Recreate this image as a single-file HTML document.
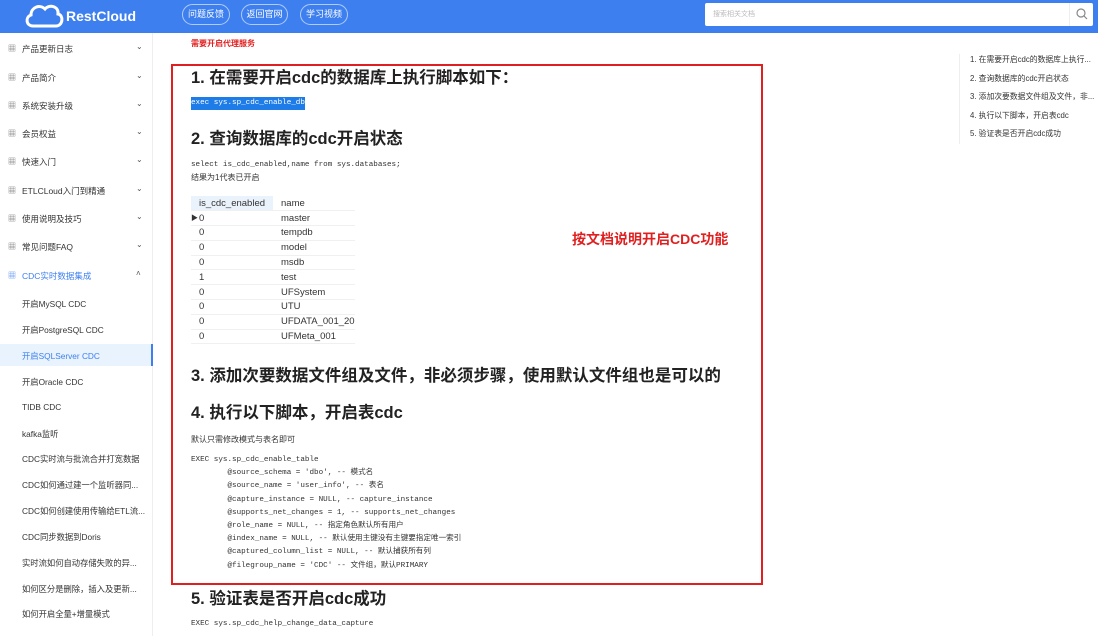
<!DOCTYPE html>
<html><head><meta charset="utf-8"><style>
*{margin:0;padding:0;box-sizing:border-box}
body{width:1098px;height:636px;overflow:hidden;background:#fff;font-family:"Liberation Sans","Noto Sans CJK SC",sans-serif;position:relative;color:#333}
.hdr{position:absolute;left:0;top:0;width:1098px;height:33px;background:#3d7fef}
.logo{position:absolute;left:24px;top:3px}
.logot{position:absolute;left:66px;top:8px;color:#fff;font-size:14px;font-weight:bold}
.btn{position:absolute;top:4px;height:21px;border:1px solid rgba(255,255,255,.6);border-radius:11px;color:#fff;font-size:9px;line-height:19px;text-align:center}
.search{position:absolute;left:705px;top:3px;width:388px;height:23px;background:#fff;border-radius:2px}
.search span{position:absolute;left:8px;top:6px;font-size:7px;color:#bbb}
.side{position:absolute;left:0;top:33px;width:153px;height:603px;border-right:1px solid #eee}
.it{position:absolute;left:0;width:153px;font-size:8.5px;color:#333}
.it .ic{position:absolute;left:8px;top:0;font-size:8px;color:#666}
.it .t{position:absolute;left:22px;top:0}
.it .ar{position:absolute;left:136px;top:-1px;font-size:8px;color:#555}
.sub{position:absolute;left:22px;font-size:8.3px;color:#333}
.act{position:absolute;left:0;top:311px;width:153px;height:22px;background:#e8f3fd;border-right:2px solid #3d7fef}
.box{position:absolute;left:171px;top:64px;width:592px;height:521px;border:2px solid #e02020}
h2{position:absolute;left:191px;font-size:16.5px;font-weight:bold;color:#222;white-space:nowrap}
.mono{position:absolute;left:191px;font-family:"Liberation Mono","Noto Sans CJK SC",monospace;font-size:7.6px;color:#333;white-space:pre;line-height:13.2px}
.sm{position:absolute;left:191px;font-size:8px;color:#333}
table{position:absolute;left:191px;top:196px;border-collapse:collapse;font-size:9.5px;font-family:"Liberation Sans",sans-serif}
td{height:14.8px;padding:0 0 0 8px;border-bottom:1px solid #f0f0f0}
td.a{width:82px}td.b{width:72px;padding-left:8px;overflow:hidden;white-space:nowrap}
.toc{position:absolute;left:959px;top:54px;border-left:1px solid #eee;height:90px;padding-left:10px}
.toc div{font-size:7.8px;color:#333;height:18.6px;white-space:nowrap}
</style></head><body>
<div class="hdr">
<svg class="logo" width="40" height="26" viewBox="0 0 40 26"><path d="M9 23 C2 23 1 14 7 12 C7 4 16 1 21 6 C25 1 35 3 34 11 C40 12 39 23 32 23 Z" fill="none" stroke="#fff" stroke-width="3"/></svg>
<div class="logot">RestCloud</div>
<div class="btn" style="left:182px;width:48px">问题反馈</div>
<div class="btn" style="left:241px;width:47px">返回官网</div>
<div class="btn" style="left:300px;width:48px">学习视频</div>
<div class="search"><span>搜索相关文档</span><svg style="position:absolute;right:0;top:0;border-left:1px solid #eee" width="24" height="23"><circle cx="11" cy="10" r="4" fill="none" stroke="#888" stroke-width="1.2"/><path d="M14 13 L17 16" stroke="#888" stroke-width="1.2"/></svg></div>
</div>
<div class="side">
<div class="act"></div>
<div class="it" style="top:10px"><span class="ic">▦</span><span class="t">产品更新日志</span><span class="ar">⌄</span></div>
<div class="it" style="top:39px"><span class="ic">▦</span><span class="t">产品简介</span><span class="ar">⌄</span></div>
<div class="it" style="top:67px"><span class="ic">▦</span><span class="t">系统安装升级</span><span class="ar">⌄</span></div>
<div class="it" style="top:95px"><span class="ic">▦</span><span class="t">会员权益</span><span class="ar">⌄</span></div>
<div class="it" style="top:123px"><span class="ic">▦</span><span class="t">快速入门</span><span class="ar">⌄</span></div>
<div class="it" style="top:152px"><span class="ic">▦</span><span class="t">ETLCLoud入门到精通</span><span class="ar">⌄</span></div>
<div class="it" style="top:180px"><span class="ic">▦</span><span class="t">使用说明及技巧</span><span class="ar">⌄</span></div>
<div class="it" style="top:208px"><span class="ic">▦</span><span class="t">常见问题FAQ</span><span class="ar">⌄</span></div>
<div class="it" style="top:237px;color:#3d7fef"><span class="ic" style="color:#3d7fef">▦</span><span class="t">CDC实时数据集成</span><span class="ar">˄</span></div>
<div class="sub" style="top:265px">开启MySQL CDC</div>
<div class="sub" style="top:291px">开启PostgreSQL CDC</div>
<div class="sub" style="top:317px;color:#3d7fef">开启SQLServer CDC</div>
<div class="sub" style="top:343px">开启Oracle CDC</div>
<div class="sub" style="top:369px">TIDB CDC</div>
<div class="sub" style="top:395px">kafka监听</div>
<div class="sub" style="top:420px">CDC实时流与批流合并打宽数据</div>
<div class="sub" style="top:446px">CDC如何通过建一个监听器同...</div>
<div class="sub" style="top:472px">CDC如何创建使用传输给ETL流...</div>
<div class="sub" style="top:498px">CDC同步数据到Doris</div>
<div class="sub" style="top:524px">实时流如何自动存储失败的异...</div>
<div class="sub" style="top:550px">如何区分是删除，插入及更新...</div>
<div class="sub" style="top:575px">如何开启全量+增量模式</div>
</div>
<div style="position:absolute;left:191px;top:38px;font-size:8px;color:#e02020;font-weight:bold">需要开启代理服务</div>
<div class="box"></div>
<h2 style="top:64px">1. 在需要开启cdc的数据库上执行脚本如下：</h2>
<div class="mono" style="top:97px;background:#1e7ce8;color:#fff">exec sys.sp_cdc_enable_db</div>
<h2 style="top:125px">2. 查询数据库的cdc开启状态</h2>
<div class="mono" style="top:159px">select is_cdc_enabled,name from sys.databases;</div>
<div class="sm" style="top:172px">结果为1代表已开启</div>
<table>
<tr><td class="a" style="background:#eaf2fb">is_cdc_enabled</td><td class="b">name</td></tr>
<tr><td class="a">0</td><td class="b">master</td></tr>
<tr><td class="a">0</td><td class="b">tempdb</td></tr>
<tr><td class="a">0</td><td class="b">model</td></tr>
<tr><td class="a">0</td><td class="b">msdb</td></tr>
<tr><td class="a">1</td><td class="b">test</td></tr>
<tr><td class="a">0</td><td class="b">UFSystem</td></tr>
<tr><td class="a">0</td><td class="b">UTU</td></tr>
<tr><td class="a">0</td><td class="b">UFDATA_001_20</td></tr>
<tr><td class="a">0</td><td class="b">UFMeta_001</td></tr>
</table>
<div style="position:absolute;left:191px;top:213px;font-size:7px">▶</div>
<div style="position:absolute;left:572px;top:229px;font-size:14px;font-weight:bold;color:#e02020">按文档说明开启CDC功能</div>
<h2 style="top:362px">3. 添加次要数据文件组及文件，非必须步骤，使用默认文件组也是可以的</h2>
<h2 style="top:399px">4. 执行以下脚本，开启表cdc</h2>
<div class="sm" style="top:434px">默认只需修改模式与表名即可</div>
<div class="mono" style="top:454px">EXEC sys.sp_cdc_enable_table
        @source_schema = 'dbo', -- 模式名
        @source_name = 'user_info', -- 表名
        @capture_instance = NULL, -- capture_instance
        @supports_net_changes = 1, -- supports_net_changes
        @role_name = NULL, -- 指定角色默认所有用户
        @index_name = NULL, -- 默认使用主键没有主键要指定唯一索引
        @captured_column_list = NULL, -- 默认捕获所有列
        @filegroup_name = 'CDC' -- 文件组，默认PRIMARY</div>
<h2 style="top:585px">5. 验证表是否开启cdc成功</h2>
<div class="mono" style="top:618px">EXEC sys.sp_cdc_help_change_data_capture</div>
<div class="toc">
<div>1. 在需要开启cdc的数据库上执行...</div>
<div>2. 查询数据库的cdc开启状态</div>
<div>3. 添加次要数据文件组及文件，非...</div>
<div>4. 执行以下脚本，开启表cdc</div>
<div>5. 验证表是否开启cdc成功</div>
</div>
</body></html>
